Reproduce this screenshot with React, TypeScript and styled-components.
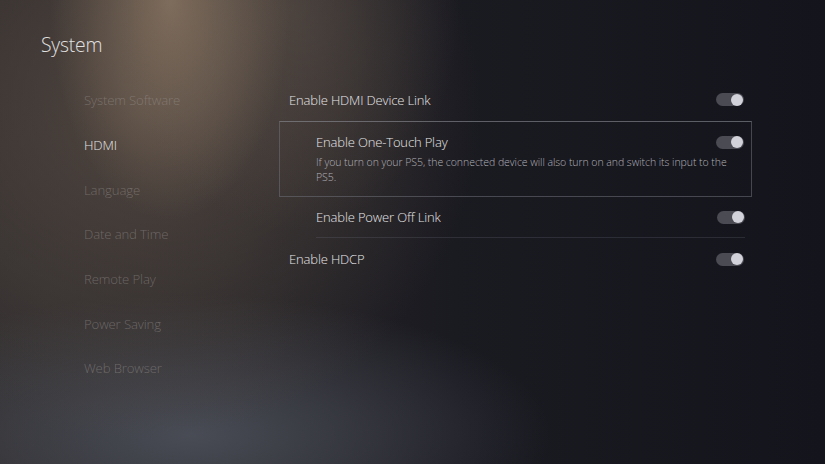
import React from 'react';
import styled, { createGlobalStyle } from 'styled-components';

const GlobalStyle = createGlobalStyle`
	html, body {
		margin: 0;
		padding: 0;
		background: #14151c;
	}
	body {
		font-family: 'Open Sans', 'Noto Sans', sans-serif;
		-webkit-font-smoothing: antialiased;
	}
`;

const sideItems = [
	'System Software',
	'HDMI',
	'Language',
	'Date and Time',
	'Remote Play',
	'Power Saving',
	'Web Browser',
];

const Screen = styled.div`
	width: 825px;
	height: 464px;
	overflow: hidden;
	display: flex;
	flex-direction: column;
	background:
		radial-gradient(ellipse 120px 220px at 170px 0px, rgba(150, 128, 106, 0.7), transparent 100%),
		radial-gradient(ellipse 170px 220px at 290px 10px, rgba(110, 96, 84, 0.4), transparent 100%),
		radial-gradient(ellipse 340px 330px at 140px 110px, rgba(88, 76, 68, 0.8), transparent 100%),
		radial-gradient(ellipse 360px 140px at 190px 435px, rgba(76, 80, 90, 0.9), transparent 100%),
		radial-gradient(ellipse 260px 200px at 40px 300px, rgba(50, 47, 48, 0.7), transparent 100%),
		linear-gradient(90deg, #2c292a 0%, #262427 28%, #1a1a21 55%, #14151c 100%);
`;

const Header = styled.h1`
	margin: 0;
	padding: 33px 0 0 41px;
	height: 45px;
	font-size: 19.3px;
	line-height: 24px;
	font-weight: 300;
	color: #e0e0e0;
	letter-spacing: -0.2px;
`;

const Body = styled.div`
	display: flex;
`;

const Sidebar = styled.nav`
	width: 195px;
	padding-left: 84px;
	display: flex;
	flex-direction: column;
`;

const SideItem = styled.div<{ $active?: boolean }>`
	height: 44.7px;
	display: flex;
	align-items: center;
	font-size: 13.2px;
	font-weight: 300;
	letter-spacing: -0.15px;
	white-space: nowrap;
	color: ${p => (p.$active ? '#e2e2e2' : 'rgba(155, 150, 146, 0.5)')};
`;

const Panel = styled.section`
	width: 473px;
	display: flex;
	flex-direction: column;
`;

const Row = styled.div<{ $h: number }>`
	height: ${p => p.$h}px;
	display: flex;
	align-items: center;
	justify-content: space-between;
	padding: 0 8px 0 10px;
`;

const SubRow = styled.div`
	height: 40px;
	margin: 0 7px 0 37px;
	display: flex;
	align-items: center;
	justify-content: space-between;
	border-bottom: 1px solid rgba(120, 122, 135, 0.22);
`;

const Label = styled.span`
	font-size: 13px;
	font-weight: 300;
	color: #e6e6e8;
	letter-spacing: -0.15px;
`;

const FocusBox = styled.div`
	border: 1px solid rgba(110, 112, 122, 0.55);
	border-top-color: rgba(140, 142, 150, 0.6);
	padding: 11px 7px 11px 36px;
	display: flex;
	flex-direction: column;
`;

const FocusHead = styled.div`
	height: 18px;
	display: flex;
	align-items: center;
	justify-content: space-between;
`;

const Desc = styled.p`
	margin: 4px 0 0;
	font-size: 10.5px;
	font-weight: 300;
	line-height: 15px;
	color: #b0b0b6;
	width: 425px;
	letter-spacing: -0.05px;
`;

const Track = styled.div`
	width: 28px;
	height: 13px;
	border-radius: 7px;
	background: #4b4b54;
	display: flex;
	align-items: center;
	justify-content: flex-end;
	padding-right: 1px;
	box-sizing: border-box;
`;

const Knob = styled.div`
	width: 12px;
	height: 12px;
	border-radius: 50%;
	background: #d2d2da;
`;

const Toggle = () => (
	<Track>
		<Knob />
	</Track>
);

export default function App() {
	return (
		<>
			<GlobalStyle />
			<Screen>
				<Header>System</Header>
				<Body>
					<Sidebar>
						{sideItems.map(item => (
							<SideItem key={item} $active={item === 'HDMI'}>
								{item}
							</SideItem>
						))}
					</Sidebar>
					<Panel>
						<Row $h={43}>
							<Label>Enable HDMI Device Link</Label>
							<Toggle />
						</Row>
						<FocusBox>
							<FocusHead>
								<Label>Enable One-Touch Play</Label>
								<Toggle />
							</FocusHead>
							<Desc>
								If you turn on your PS5, the connected device will also turn on and switch its input to the PS5.
							</Desc>
						</FocusBox>
						<SubRow>
							<Label>Enable Power Off Link</Label>
							<Toggle />
						</SubRow>
						<Row $h={42}>
							<Label>Enable HDCP</Label>
							<Toggle />
						</Row>
					</Panel>
				</Body>
			</Screen>
		</>
	);
}
